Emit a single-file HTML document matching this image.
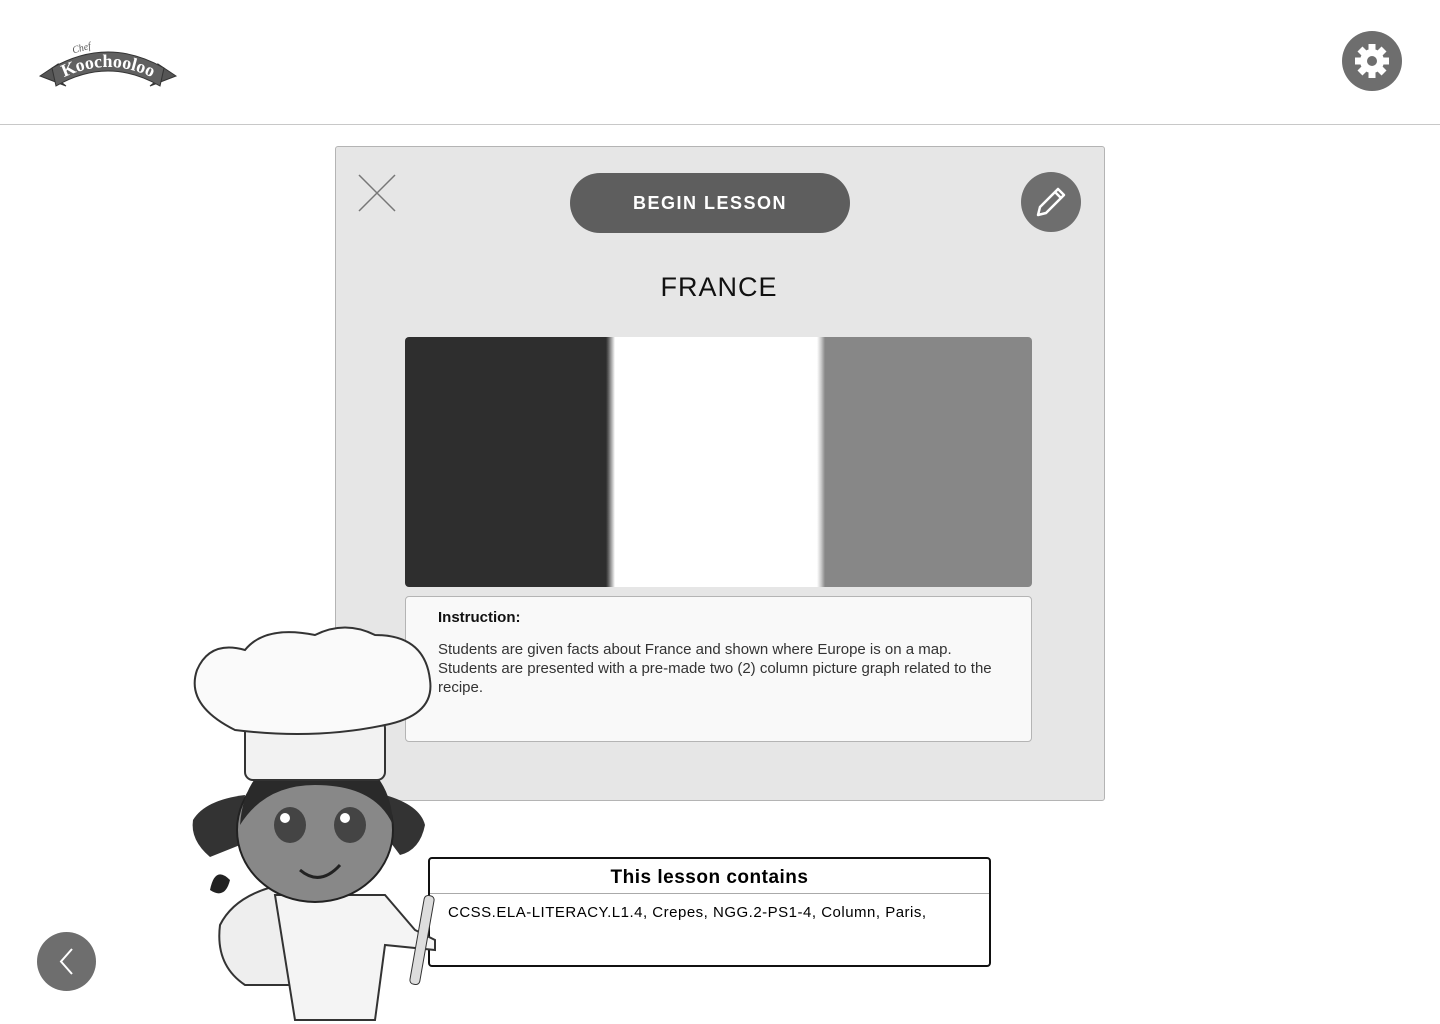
<!DOCTYPE html>
<html><head><meta charset="utf-8"><style>
body{margin:0;width:1440px;height:1024px;background:#fff;position:relative;overflow:hidden;font-family:"Liberation Sans",sans-serif}
.hdr{position:absolute;left:0;top:0;width:1440px;height:124px;border-bottom:1px solid #c8c8c8}
.card{position:absolute;left:335px;top:146px;width:768px;height:653px;background:#e6e6e6;border:1px solid #b4b4b4;border-radius:3px}
.btn{position:absolute;left:570px;top:173px;width:280px;height:60px;border-radius:30px;background:#5e5e5e;color:#fff;font-weight:bold;font-size:18px;letter-spacing:1.5px;text-align:center;line-height:60px}
.title{position:absolute;left:335px;width:768px;top:272px;text-align:center;font-size:27px;letter-spacing:1px;color:#111}
.flag{position:absolute;left:405px;top:337px;width:627px;height:250px;border-radius:4px;overflow:hidden;background:linear-gradient(90deg,#2e2e2e 0,#2e2e2e 201px,#555 203px,#fff 210px,#fff 412px,#ccc 416px,#878787 420px,#878787 100%)}
.instr{position:absolute;left:405px;top:596px;width:625px;height:144px;background:#f9f9f9;border:1px solid #b4b4b4;border-radius:4px;font-size:15px;color:#333}
.contains{position:absolute;left:428px;top:857px;width:559px;height:106px;border:2px solid #111;border-radius:4px;background:#fff}
</style></head><body>
<div class="hdr"></div>
<svg style="position:absolute;left:38px;top:32px" width="140" height="56" viewBox="0 0 140 56">
<path d="M2 44 L20 32 L18 46 L28 54 Z" fill="#555" stroke="#333"/><path d="M138 44 L120 32 L122 46 L112 54 Z" fill="#555" stroke="#333"/>
<path d="M14 36 Q70 4 126 36 L122 54 Q70 24 18 54 Z" fill="#606060" stroke="#333"/>
<defs><path id="arc" d="M17 50 Q70 20 123 50"/></defs>
<text font-family="Liberation Serif" font-weight="bold" font-size="18" fill="#fff" text-anchor="middle"><textPath href="#arc" startOffset="50%">Koochooloo</textPath></text>
<text x="34" y="20" font-family="Liberation Serif" font-style="italic" font-size="10" fill="#555" transform="rotate(-15 40 16)">Chef</text>
</svg>
<svg style="position:absolute;left:1342px;top:31px" width="60" height="60" viewBox="0 0 60 60">
<circle cx="30" cy="30" r="30" fill="#6e6e6e"/>
<g fill="#fff" transform="translate(30 30)">
<circle r="12"/>
<rect x="-3.5" y="-17" width="7" height="34"/><rect x="-3.5" y="-17" width="7" height="34" transform="rotate(45)"/><rect x="-3.5" y="-17" width="7" height="34" transform="rotate(90)"/><rect x="-3.5" y="-17" width="7" height="34" transform="rotate(135)"/>
<circle r="5" fill="#6e6e6e"/></g></svg>
<div class="card"></div>
<svg style="position:absolute;left:358px;top:174px" width="38" height="38"><path d="M1 1L37 37M37 1L1 37" stroke="#777" stroke-width="1.5"/></svg>
<div class="btn">BEGIN LESSON</div>
<svg style="position:absolute;left:1021px;top:172px" width="60" height="60" viewBox="0 0 60 60"><circle cx="30" cy="30" r="30" fill="#6e6e6e"/><path d="M17 43 L19 35 L37 17 L43 23 L25 41 Z M34 20 L40 26" stroke="#fff" stroke-width="2.5" fill="none" stroke-linejoin="round"/></svg>
<div class="title">FRANCE</div>
<div class="flag"></div>
<div class="instr"><div style="position:absolute;left:32px;top:12px;font-weight:bold;color:#111">Instruction:</div>
<div style="position:absolute;left:32px;top:43px;width:565px;line-height:19px">Students are given facts about France and shown where Europe is on a map. Students are presented with a pre-made two (2) column picture graph related to the recipe.</div></div>
<div class="contains"><div style="height:34px;border-bottom:1px solid #aaa;text-align:center;font-weight:bold;font-size:19px;line-height:38px;letter-spacing:.5px">This lesson contains</div>
<div style="padding:10px 18px;font-size:15px;letter-spacing:.5px">CCSS.ELA-LITERACY.L1.4, Crepes, NGG.2-PS1-4, Column, Paris,</div></div>
<svg style="position:absolute;left:185px;top:625px" width="265" height="399" viewBox="0 0 265 399">
<path d="M60 170 Q20 175 8 195 Q5 215 25 232 L55 220 Z" fill="#333"/>
<path d="M200 170 Q235 180 240 200 Q235 225 215 230 L200 210 Z" fill="#333"/>
<path d="M60 360 Q30 340 35 300 Q50 270 95 260 L110 360 Z" fill="#eee" stroke="#333" stroke-width="2"/>
<path d="M90 270 L200 270 L230 305 L250 315 L250 325 L200 320 L190 395 L110 395 Z" fill="#f4f4f4" stroke="#333" stroke-width="2"/>
<ellipse cx="130" cy="205" rx="78" ry="72" fill="#888" stroke="#222" stroke-width="2"/>
<path d="M55 200 Q60 130 130 125 Q205 130 208 200 Q190 160 130 160 Q80 160 55 200 Z" fill="#2a2a2a"/>
<ellipse cx="105" cy="200" rx="16" ry="18" fill="#444"/><ellipse cx="165" cy="200" rx="16" ry="18" fill="#444"/>
<circle cx="100" cy="193" r="5" fill="#fff"/><circle cx="160" cy="193" r="5" fill="#fff"/>
<path d="M115 245 Q135 262 155 240" stroke="#222" stroke-width="3" fill="none"/>
<rect x="60" y="95" width="140" height="60" rx="8" fill="#f2f2f2" stroke="#333" stroke-width="2"/>
<path d="M50 105 Q0 80 12 45 Q25 15 60 25 Q80 0 130 10 Q160 -5 190 10 Q240 10 245 55 Q250 90 200 100 Q130 115 50 105 Z" fill="#fafafa" stroke="#333" stroke-width="2"/>
<path d="M25 265 Q30 240 45 255 Q40 275 25 265 Z" fill="#222"/>
<rect x="232" y="270" width="10" height="90" rx="4" fill="#ddd" stroke="#333" transform="rotate(10 237 315)"/>
</svg>
<svg style="position:absolute;left:37px;top:932px" width="59" height="59" viewBox="0 0 59 59"><circle cx="29.5" cy="29.5" r="29.5" fill="#6e6e6e"/><path d="M35 17 L24 29.5 L35 42" stroke="#fff" stroke-width="2" fill="none"/></svg>
</body></html>
